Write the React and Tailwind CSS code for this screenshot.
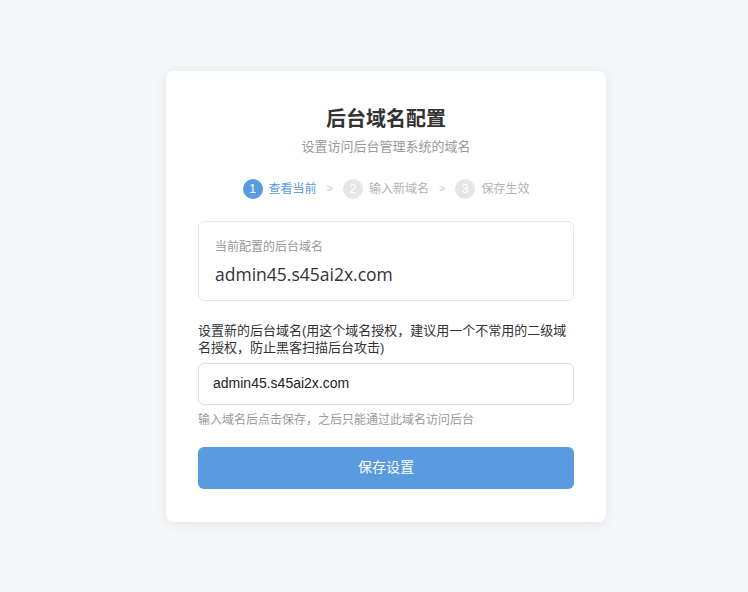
import React from "react";

const cjk = { fontFamily: '"Liberation Sans", "Noto Sans CJK SC", sans-serif' };

function Step({ n, label, active }) {
  return (
    <div className="flex items-center gap-[6px]">
      <div
        className={
          "flex h-[20px] w-[20px] items-center justify-center rounded-full text-[12px] text-white " +
          (active ? "bg-[#5a9ade]" : "bg-[#e6e6e6]")
        }
      >
        {n}
      </div>
      <span className={"text-[12px] " + (active ? "text-[#5a9ade]" : "text-[#b3b3b3]")}>{label}</span>
    </div>
  );
}

function Arrow() {
  return <span className="mx-[10px] text-[11px] text-[#c8c8c8]">&gt;</span>;
}

export default function App() {
  return (
    <div className="flex h-[592px] w-full items-center justify-center bg-[#f5f7fa] pl-[24px]" style={cjk}>
      <div className="w-[440px] rounded-[8px] bg-white px-[32px] pt-[34px] pb-[33px] shadow-[0_2px_12px_rgba(0,0,0,0.08)]">
        <h1 className="text-center text-[20px] font-bold leading-[28px] text-[#333]">后台域名配置</h1>
        <p className="mt-[5px] text-center text-[13px] leading-[18px] text-[#999]">设置访问后台管理系统的域名</p>
        <div className="mt-[23px] flex items-center justify-center">
          <Step n="1" label="查看当前" active />
          <Arrow />
          <Step n="2" label="输入新域名" />
          <Arrow />
          <Step n="3" label="保存生效" />
        </div>
        <div className="mt-[22px] rounded-[6px] border border-[#e8e8e8] px-[16px] pt-[17px] pb-[14px]">
          <div className="text-[12px] leading-[16px] text-[#999]">当前配置的后台域名</div>
          <div
            className="mt-[7px] text-[17.5px] leading-[24px] text-[#333]"
            style={{ fontFamily: '"Open Sans", "Noto Sans", sans-serif' }}
          >
            admin45.s45ai2x.com
          </div>
        </div>
        <div className="mt-[21px] text-[13px] leading-[17px] text-[#333]">
          设置新的后台域名(用这个域名授权，建议用一个不常用的二级域名授权，防止黑客扫描后台攻击)
        </div>
        <div className="mt-[7px] flex h-[42px] items-center rounded-[6px] border border-[#dcdcdc] px-[14px] text-[14px] text-[#222]">
          admin45.s45ai2x.com
        </div>
        <div className="mt-[7px] text-[12px] leading-[16px] text-[#999]">输入域名后点击保存，之后只能通过此域名访问后台</div>
        <button className="mt-[19px] flex h-[42px] w-full items-center justify-center rounded-[6px] bg-[#5a9ade] text-[14px] text-white">
          保存设置
        </button>
      </div>
    </div>
  );
}
